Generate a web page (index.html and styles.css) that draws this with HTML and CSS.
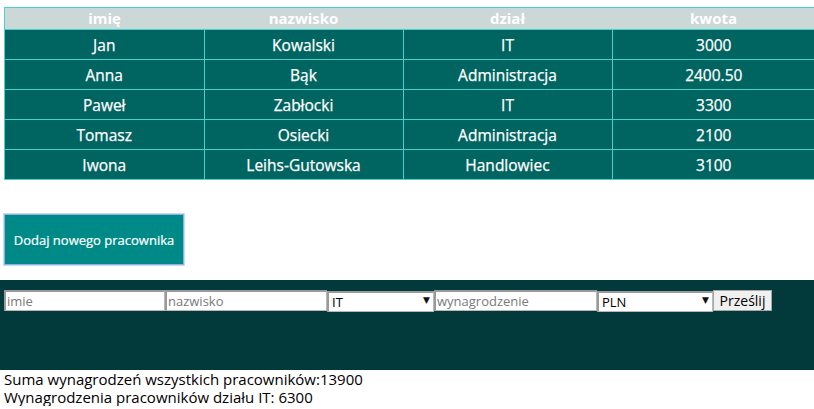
FILE: index.html
```html
<!DOCTYPE html>
<html lang="pl">
<head>
<meta charset="utf-8">
<title>Pracownicy</title>
<link rel="stylesheet" href="styles.css">
</head>
<body>
<table class="staff">
  <thead>
    <tr><th>imię</th><th>nazwisko</th><th>dział</th><th>kwota</th></tr>
  </thead>
  <tbody>
    <tr><td>Jan</td><td>Kowalski</td><td>IT</td><td>3000</td></tr>
    <tr><td>Anna</td><td>Bąk</td><td>Administracja</td><td>2400.50</td></tr>
    <tr><td>Paweł</td><td>Zabłocki</td><td>IT</td><td>3300</td></tr>
    <tr><td>Tomasz</td><td>Osiecki</td><td>Administracja</td><td>2100</td></tr>
    <tr><td>Iwona</td><td>Leihs-Gutowska</td><td>Handlowiec</td><td>3100</td></tr>
  </tbody>
</table>

<div class="add-wrap">
  <button class="add-btn" type="button">Dodaj nowego pracownika</button>
</div>

<form class="form-band">
  <div class="form-row">
    <input class="field f-name" type="text" placeholder="imie">
    <input class="field f-surname" type="text" placeholder="nazwisko">
    <div class="sel sel-dept">
      <select class="sel-input"><option>IT</option><option>Administracja</option><option>Handlowiec</option></select>
      <span class="sel-arrow">▼</span>
    </div>
    <input class="field f-salary" type="text" placeholder="wynagrodzenie">
    <div class="sel sel-cur">
      <select class="sel-input"><option>PLN</option><option>EUR</option><option>USD</option></select>
      <span class="sel-arrow">▼</span>
    </div>
    <button class="submit" type="button">Prześlij</button>
  </div>
</form>

<div class="summary">
  <p class="line">Suma wynagrodzeń wszystkich pracowników:13900</p>
  <p class="line">Wynagrodzenia pracowników działu IT: 6300</p>
</div>
</body>
</html>
```
FILE: styles.css
```css
html, body {
  margin: 0;
  padding: 0;
  background: #ffffff;
}
body {
  font-family: "Open Sans", "DejaVu Sans", sans-serif;
  overflow: hidden;
}
.staff {
  border-collapse: collapse;
  margin: 7px 0 0 4px;
  width: 812px;
  table-layout: fixed;
  border: 1px solid #45d3cb;
  font-size: 15px;
}
.staff th {
  background: #ccd7d7;
  color: #ffffff;
  font-weight: 700;
  height: 21px;
  padding: 0;
  line-height: 21px;
  border-bottom: 1px solid #45d3cb;
}
.staff th:nth-child(1), .staff td:nth-child(1) { width: 199px; }
.staff th:nth-child(2), .staff td:nth-child(2) { width: 199px; }
.staff th:nth-child(3), .staff td:nth-child(3) { width: 209px; }
.staff td {
  background: #006461;
  color: #ffffff;
  text-align: center;
  height: 29px;
  padding: 0;
  border: 1px solid #45d3cb;
  font-size: 15.5px;
  line-height: 20px;
  font-weight: 400;
  -webkit-text-stroke: 0.25px #ffffff;
}
.add-wrap {
  padding: 34px 0 0 4px;
  height: 66px;
}
.add-btn {
  display: block;
  width: 180px;
  height: 51px;
  margin: 0;
  background: #008a87;
  border: 1px solid #8fb0e4;
  box-shadow: 0 0 0 1px #c9d9f3;
  color: #ffffff;
  font-family: "Open Sans", "DejaVu Sans", sans-serif;
  font-size: 13px;
  font-weight: 400;
  -webkit-text-stroke: 0.2px #ffffff;
  padding: 0;
}
.form-band {
  margin: 0;
  background: #023a3b;
  height: 90px;
  padding: 10px 0 0 4px;
  box-sizing: border-box;
}
.form-row {
  display: flex;
  align-items: flex-start;
}
.field {
  box-sizing: border-box;
  height: 21px;
  border-style: solid;
  border-width: 2px 1px 1px 2px;
  border-color: #9a9a9a #b8b8b8 #b8b8b8 #9a9a9a;
  background: #ffffff;
  margin: 0;
  padding: 0 1px;
  font-family: "Open Sans", "DejaVu Sans", sans-serif;
  font-size: 13px;
  color: #000000;
  outline: none;
}
.field::placeholder { color: #7a7a7a; }
.f-name { width: 161px; }
.f-surname { width: 162px; }
.f-salary { width: 163px; }
.sel {
  position: relative;
  height: 21px;
}
.sel-dept { width: 107px; }
.sel-cur { width: 116px; }
.sel-input {
  appearance: none;
  -webkit-appearance: none;
  box-sizing: border-box;
  width: 100%;
  height: 21px;
  margin: 0;
  border-style: solid;
  border-width: 2px 1px 1px 2px;
  border-color: #9a9a9a #b8b8b8 #b8b8b8 #9a9a9a;
  border-radius: 0;
  background: #ffffff;
  padding: 0 3px;
  font-family: "Open Sans", "DejaVu Sans", sans-serif;
  font-size: 13px;
  color: #000000;
}
.sel-arrow {
  position: absolute;
  right: 4px;
  top: 4px;
  font-size: 9px;
  line-height: 12px;
  color: #111111;
  pointer-events: none;
}
.submit {
  box-sizing: border-box;
  width: 59px;
  height: 21px;
  margin: 0;
  padding: 0;
  background: #f0f0f0;
  border: 1px solid #a8a8a8;
  border-radius: 0;
  font-family: "Open Sans", "DejaVu Sans", sans-serif;
  font-size: 14px;
  color: #000000;
}
.summary {
  padding: 0 0 0 4px;
}
.line {
  margin: 0;
  font-size: 15px;
  line-height: 18px;
  color: #000000;
}
```
